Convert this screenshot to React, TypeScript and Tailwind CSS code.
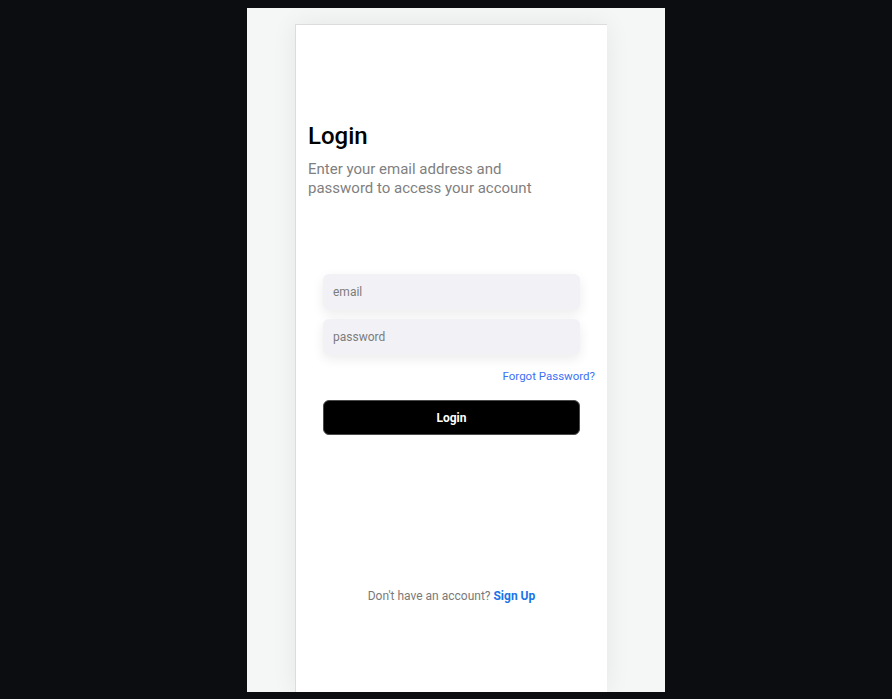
export default function App() {
  return (
    <div className="h-[699px] w-[892px] bg-[#0b0d10] pt-2 pl-[247px] overflow-hidden" style={{ fontFamily: "Roboto, 'Liberation Sans', sans-serif" }}>
      <div className="w-[418px] h-[684px] bg-[#f5f6f6] pt-4 pl-12 overflow-hidden">
        <div className="w-[312px] h-[668px] bg-white border-l border-t border-[#dcdcdc] shadow-[0_0_24px_rgba(0,0,0,0.07)] px-3 flex flex-col">
          <h1 className="mt-[97px] text-[24px] leading-[28px] font-medium text-black">Login</h1>
          <p className="mt-[10px] text-[15px] leading-[19px] text-[#7f7f7f] w-[240px]">
            Enter your email address and password to access your account
          </p>
          <div className="mt-[76px] mx-[15px] flex flex-col gap-[9px]">
            <div className="h-[36px] rounded-md bg-[#f2f2f6] shadow-[0_4px_12px_rgba(0,0,0,0.08)] pl-[10px] flex items-center text-[12px] text-[#7c7c7c]">
              email
            </div>
            <div className="h-[36px] rounded-md bg-[#f2f2f6] shadow-[0_4px_12px_rgba(0,0,0,0.08)] pl-[10px] flex items-center text-[12px] text-[#7c7c7c]">
              password
            </div>
          </div>
          <div className="mt-[13px] text-right text-[11.5px] leading-[16px] text-[#3d6ff5]">Forgot Password?</div>
          <button className="mt-[16px] mx-[15px] h-[35px] rounded-md bg-black border border-[#4a4a4a] text-white text-[12px] font-bold">
            Login
          </button>
          <div className="mt-[153px] text-center text-[12px] leading-[16px] text-[#7a7a7a]">
            Don't have an account? <span className="font-bold text-[#1a73e8]">Sign Up</span>
          </div>
        </div>
      </div>
    </div>
  );
}
